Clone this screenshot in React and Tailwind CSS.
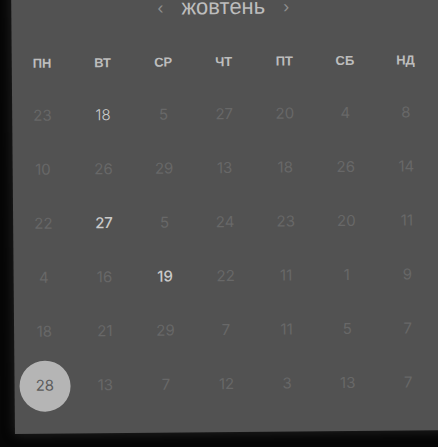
const weekdays = ["ПН", "ВТ", "СР", "ЧТ", "ПТ", "СБ", "НД"];

// 0 = dim, 1 = bright, 2 = bright bold, 3 = selected
const rows = [
  [[23], [18, 1], [5], [27], [20], [4], [8]],
  [[10], [26], [29], [13], [18], [26], [14]],
  [[22], [27, 2], [5], [24], [23], [20], [11]],
  [[4], [16], [19, 2], [22], [11], [1], [9]],
  [[18], [21], [29], [7], [11], [5], [7]],
  [[28, 3], [13], [7], [12], [3], [13], [7]],
];

function DayCell({ value, kind = 0 }) {
  if (kind === 3) {
    return (
      <div className="flex h-[54px] items-center justify-center">
        <span className="flex h-[51px] w-[51px] items-center justify-center rounded-full bg-[#b5b5b5] text-[15px] text-[#5c5c5c]">
          {value}
        </span>
      </div>
    );
  }
  return (
    <div
      className={
        "flex h-[54px] items-center justify-center text-[15px] " +
        (kind === 0
          ? "text-[#686868]"
          : kind === 1
          ? "font-light text-[#cdcdcd]"
          : "font-medium text-[#cacaca]")
      }
    >
      {value}
    </div>
  );
}

export default function App() {
  return (
    <div
      className="relative h-[447px] w-[438px] overflow-hidden bg-[#060606]"
      style={{ fontFamily: '"Liberation Sans", Arial, sans-serif' }}
    >
      <div className="-mt-[20px] ml-[13px] h-[452px] w-[440px] -rotate-[0.5deg] bg-[#525252] pt-[13px] shadow-[0_0_12px_rgba(70,70,70,0.5)]">
        <div className="flex h-[28px] w-[424px] items-center justify-center gap-[18px]">
          <span className="text-[18px] text-[#8e8e8e]">‹</span>
          <span className="text-[22px] leading-none text-[#bdbdbd]">жовтень</span>
          <span className="text-[18px] text-[#8e8e8e]">›</span>
        </div>
        <div className="mt-[16px] grid w-[424px] grid-cols-7">
          {weekdays.map((d) => (
            <div
              key={d}
              className="flex h-[50px] items-center justify-center text-[13px] font-bold text-[#bdbdbd]"
            >
              {d}
            </div>
          ))}
        </div>
        <div
          className="grid w-[424px] grid-cols-7"
          style={{ fontFamily: "Inter, sans-serif" }}
        >
          {rows.map((row, r) =>
            row.map(([v, k], c) => <DayCell key={r + "-" + c} value={v} kind={k} />)
          )}
        </div>
      </div>
    </div>
  );
}
